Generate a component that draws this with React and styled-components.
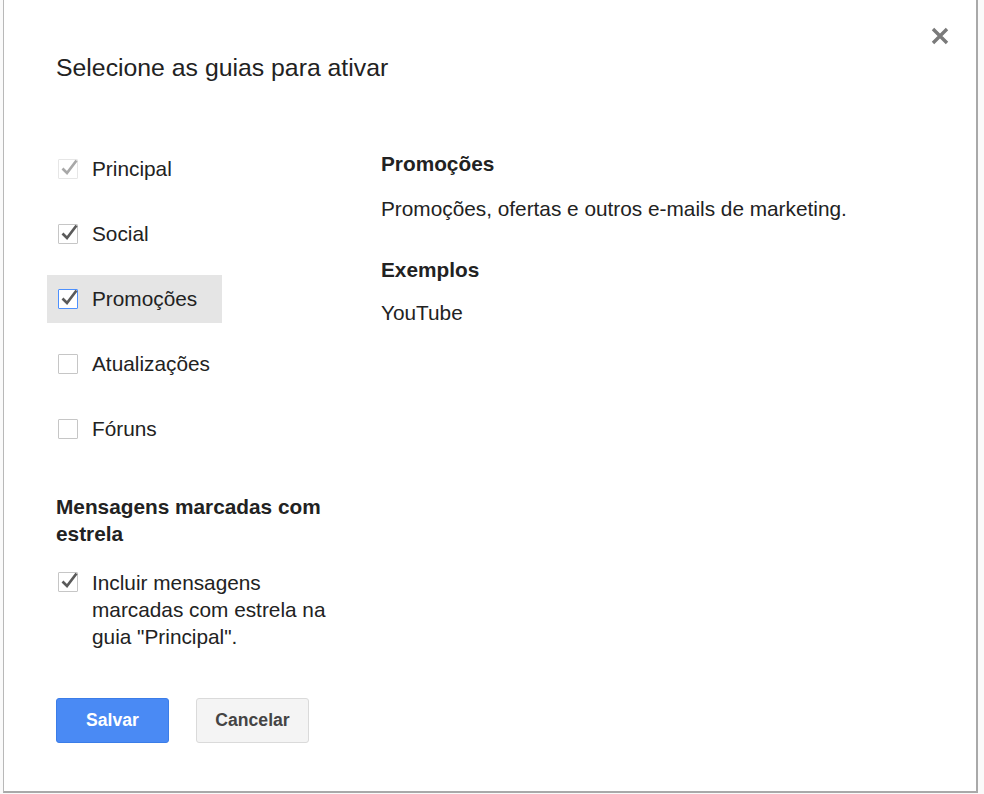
import React from "react";
import styled, { createGlobalStyle, css } from "styled-components";

const Global = createGlobalStyle`
  html, body { margin: 0; padding: 0; background: #fff; }
  body { font-family: "Liberation Sans", Arial, sans-serif; color: #222; }
`;

const Page = styled.div`
  width: 984px;
  height: 794px;
  overflow: hidden;
  background: #fafafa;
`;

const Dialog = styled.div`
  position: relative;
  box-sizing: border-box;
  margin-left: 3px;
  width: 975px;
  height: 793px;
  background: #fff;
  border-left: 1px solid #b8b8b8;
  border-right: 2px solid #a9a9a9;
  border-bottom: 2px solid #a9a9a9;
  padding: 54px 0 0 52px;
`;

const Close = styled.button`
  position: absolute;
  top: 27px;
  right: 27px;
  width: 18px;
  height: 18px;
  padding: 0;
  border: 0;
  background: none;
  cursor: pointer;
`;

const Title = styled.h1`
  margin: 0;
  font-size: 24.8px;
  line-height: 28px;
  font-weight: normal;
  color: #222;
`;

const Body = styled.div`
  display: grid;
  grid-template-columns: 280px 1fr;
  column-gap: 45px;
  margin-top: 63px;
`;

const LeftCol = styled.div`
  display: flex;
  flex-direction: column;
`;

const TabList = styled.div`
  display: flex;
  flex-direction: column;
  gap: 17px;
`;

const TabRow = styled.div`
  display: flex;
  align-items: center;
  gap: 14px;
  height: 48px;
  width: 175px;
  box-sizing: border-box;
  margin-left: -9px;
  padding-left: 11px;
  font-size: 20.8px;
  color: #222;
  ${(p) => p.$active && css`background: #e5e5e5;`}
`;

const Box = styled.span`
  position: relative;
  flex: none;
  box-sizing: border-box;
  width: 20px;
  height: 20px;
  border: 1px solid ${(p) => (p.$variant === "focus" ? "#4d90fe" : p.$variant === "disabled" ? "#e6e6e6" : "#c6c6c6")};
  background: #fff;
  border-radius: 1px;
  svg {
    position: absolute;
    left: 1px;
    top: -3px;
    overflow: visible;
  }
`;

const Check = ({ checked, variant }) => (
  <Box $variant={variant}>
    {checked && (
      <svg width="20" height="20" viewBox="0 0 20 20">
        <polyline
          points="2.5,11.5 7,16 16.5,3.5"
          fill="none"
          stroke={variant === "disabled" ? "#a8a8a8" : "#5a5a5a"}
          strokeWidth="2.7"
        />
      </svg>
    )}
  </Box>
);

const SectionTitle = styled.h2`
  margin: 40px 0 0;
  font-size: 20.8px;
  line-height: 27px;
  font-weight: bold;
  color: #222;
`;

const StarRow = styled.div`
  display: flex;
  align-items: flex-start;
  gap: 14px;
  margin-top: 22px;
  padding-left: 2px;
  font-size: 20.8px;
  line-height: 27px;
  ${Box} { margin-top: 3px; }
`;

const Buttons = styled.div`
  display: flex;
  gap: 27px;
  margin-top: 48px;
`;

const Button = styled.button`
  box-sizing: border-box;
  width: 113px;
  height: 45px;
  border-radius: 3px;
  font-family: "Liberation Sans", Arial, sans-serif;
  font-size: 17.6px;
  font-weight: bold;
  cursor: pointer;
  ${(p) =>
    p.$primary
      ? css`
          background: #4a8af4;
          border: 1px solid #3b7de8;
          color: #fff;
        `
      : css`
          background: #f4f4f4;
          border: 1px solid #dadada;
          color: #444;
        `}
`;

const RightCol = styled.div`
  padding-top: 7px;
  font-size: 20.8px;
  line-height: 24px;
`;

const InfoHead = styled.div`
  font-weight: bold;
  margin-top: ${(p) => p.$mt || 0}px;
`;

const InfoText = styled.div`
  margin-top: ${(p) => p.$mt || 0}px;
`;

const tabs = [
  { label: "Principal", checked: true, variant: "disabled" },
  { label: "Social", checked: true },
  { label: "Promoções", checked: true, variant: "focus", active: true },
  { label: "Atualizações", checked: false },
  { label: "Fóruns", checked: false },
];

export default function App() {
  return (
    <Page>
      <Global />
      <Dialog>
        <Close aria-label="Fechar">
          <svg width="18" height="18" viewBox="0 0 18 18">
            <path d="M2 2 L16 16 M16 2 L2 16" stroke="#7a7a7a" strokeWidth="3.4" />
          </svg>
        </Close>
        <Title>Selecione as guias para ativar</Title>
        <Body>
          <LeftCol>
            <TabList>
              {tabs.map((t) => (
                <TabRow key={t.label} $active={t.active}>
                  <Check checked={t.checked} variant={t.variant} />
                  <span>{t.label}</span>
                </TabRow>
              ))}
            </TabList>
            <SectionTitle>Mensagens marcadas com estrela</SectionTitle>
            <StarRow>
              <Check checked />
              <span>Incluir mensagens marcadas com estrela na guia "Principal".</span>
            </StarRow>
            <Buttons>
              <Button $primary>Salvar</Button>
              <Button>Cancelar</Button>
            </Buttons>
          </LeftCol>
          <RightCol>
            <InfoHead>Promoções</InfoHead>
            <InfoText $mt={21}>Promoções, ofertas e outros e-mails de marketing.</InfoText>
            <InfoHead $mt={37}>Exemplos</InfoHead>
            <InfoText $mt={19}>YouTube</InfoText>
          </RightCol>
        </Body>
      </Dialog>
    </Page>
  );
}
